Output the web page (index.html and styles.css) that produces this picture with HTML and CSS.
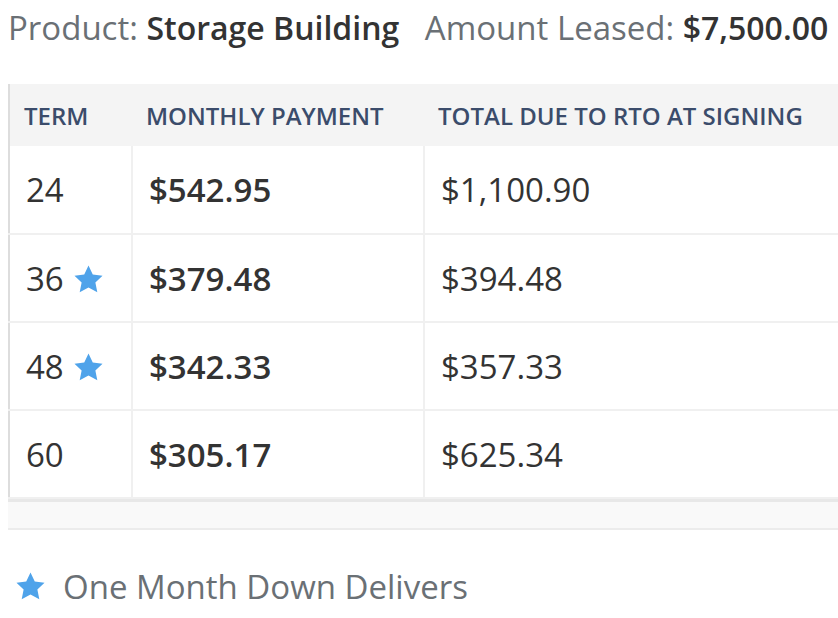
FILE: index.html
```html
<!DOCTYPE html>
<html>
<head>
<meta charset="utf-8">
<link rel="stylesheet" href="styles.css">
</head>
<body>
<div class="page">
  <div class="summary">
    <span class="label">Product:</span> <span class="value">Storage Building</span>
    <span class="label gap">Amount Leased:</span> <span class="value strong">$7,500.00</span>
  </div>
  <div class="table-wrap">
    <table class="terms">
      <thead>
        <tr><th class="c1">Term</th><th class="c2">Monthly Payment</th><th class="c3">Total Due to RTO at Signing</th></tr>
      </thead>
      <tbody>
        <tr><td>24</td><td class="pay">$542.95</td><td>$1,100.90</td></tr>
        <tr><td>36 <svg class="star" viewBox="0 0 24 24"><path d="M12 1.8l3.1 6.6 7.1.9-5.2 4.9 1.4 7.1L12 17.8l-6.4 3.5 1.4-7.1L1.8 9.3l7.1-.9z"/></svg></td><td class="pay">$379.48</td><td>$394.48</td></tr>
        <tr><td>48 <svg class="star" viewBox="0 0 24 24"><path d="M12 1.8l3.1 6.6 7.1.9-5.2 4.9 1.4 7.1L12 17.8l-6.4 3.5 1.4-7.1L1.8 9.3l7.1-.9z"/></svg></td><td class="pay">$342.33</td><td>$357.33</td></tr>
        <tr><td>60</td><td class="pay">$305.17</td><td>$625.34</td></tr>
      </tbody>
    </table>
    <div class="table-foot"></div>
  </div>
  <div class="legend">
    <svg class="star" viewBox="0 0 24 24"><path d="M12 1.8l3.1 6.6 7.1.9-5.2 4.9 1.4 7.1L12 17.8l-6.4 3.5 1.4-7.1L1.8 9.3l7.1-.9z"/></svg>
    <span>One Month Down Delivers</span>
  </div>
</div>
</body>
</html>
```
FILE: styles.css
```css
html, body {
  margin: 0;
  padding: 0;
  background: #fff;
  overflow: hidden;
}
body {
  font-family: "Open Sans", "Noto Sans", sans-serif;
  color: #333;
}
.page {
  padding: 0 0 0 8px;
  width: 900px;
}
.summary {
  font-size: 33px;
  line-height: 56px;
  white-space: nowrap;
}
.label {
  color: #6a7075;
}
.label.gap {
  margin-left: 17px;
}
.value {
  font-weight: 600;
  font-size: 32px;
  color: #333;
}
.table-wrap {
  margin-top: 28px;
}
.terms {
  border-collapse: collapse;
  width: 900px;
  border-left: 2px solid #ddd;
}
.terms th {
  background: #f4f4f4;
  color: #3b4c6b;
  font-weight: 600;
  font-size: 24px;
  text-transform: uppercase;
  text-align: left;
  height: 62px;
  padding: 0 14px;
  box-sizing: border-box;
}
.terms th.c1 { width: 123px; }
.terms th.c2 { width: 292px; }
.terms td {
  font-size: 33px;
  height: 88px;
  padding: 0 16px;
  border: 2px solid #f0f0f0;
  box-sizing: border-box;
  vertical-align: middle;
}
.terms tbody tr:first-child td { border-top: 0; }
.terms td:first-child { border-left: 0; }
.terms td.pay { font-weight: 600; font-size: 33px; }
.star {
  width: 33px;
  height: 33px;
  fill: #4fa3ea;
  vertical-align: -5px;
}
.table-foot {
  height: 26px;
  background: #f9f9f9;
  border-top: 3px solid #e8e8e8;
  border-bottom: 2px solid #ececec;
}
.legend {
  margin-top: 34px;
  display: flex;
  align-items: center;
  gap: 16px;
  padding-left: 6px;
  font-size: 33px;
  color: #6a7075;
}
```
